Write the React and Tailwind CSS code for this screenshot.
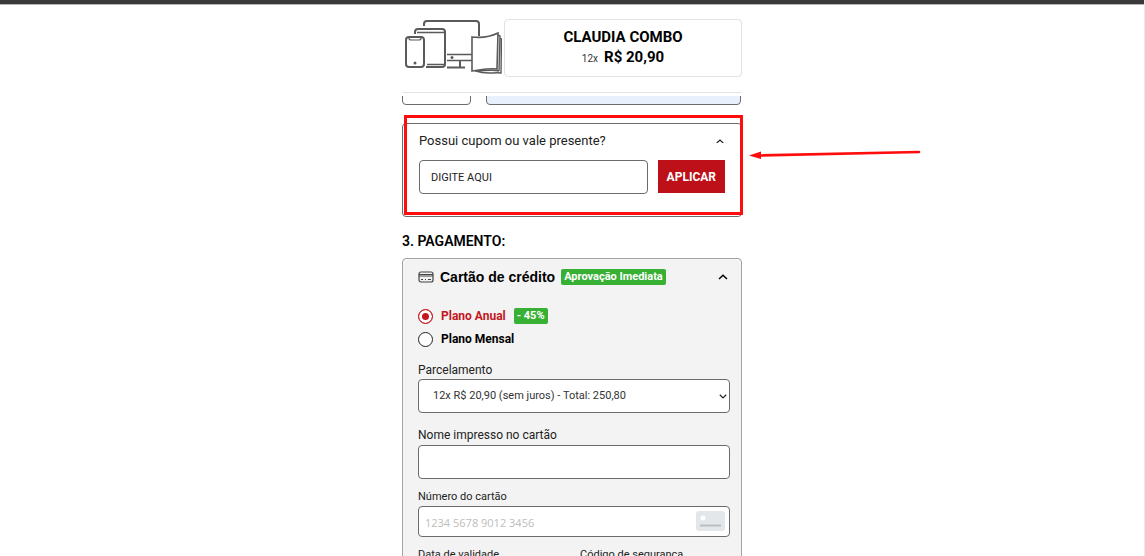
import React, { useState } from 'react';

const fieldClass = 'block w-full rounded border border-[#6b6b6b] bg-white outline-none';

const DevicesIcon = () => (
  <svg width="98" height="56" viewBox="0 0 98 56" fill="none" stroke="#5a5a5a" strokeWidth="2" className="shrink-0" aria-hidden="true">
    {/* monitor */}
    <path d="M20 6V4a3 3 0 0 1 3-3h49a3 3 0 0 1 3 3v12" />
    <path d="M43 34.500h25M43 40.500h25" strokeWidth="1.6" />
    <path d="M56 41v6M43 47.500h18" />
    <circle cx="48" cy="37.500" r="1.5" fill="#5a5a5a" stroke="none" />
    {/* tablet */}
    <path d="M11 14v-2a3 3 0 0 1 3-3h24a3 3 0 0 1 3 3v32a3 3 0 0 1-3 3H22" />
    <path d="M13 12.5h27M23 44.500h17" strokeWidth="1.4" />
    {/* phone */}
    <rect x="2" y="17" width="18" height="30" rx="3" />
    <path d="M5 18c0 2 1 2 2 2h8c1 0 2 0 2-2" strokeWidth="1.2" />
    <circle cx="11" cy="43" r="1.500" fill="#5a5a5a" stroke="none" />
    {/* magazine */}
    <path d="M68 17c9 1 18 0 26-4l-1 36c-7-1-17 1-25 2z" fill="#fff" strokeWidth="1.6" />
    <path d="M94 15l2 1-1 35M96 18l1.500 1-.5 34c-8-1-15 2-25-2M95 51c-7-2-15 0-24 0" strokeWidth="1.4" />
  </svg>
);

const ChevronUp = ({ className }) => (
  <svg viewBox="0 0 10 6" fill="none" stroke="currentColor" strokeWidth="1.5" className={className} aria-hidden="true">
    <path d="M1 5l4-3.800L9 5" />
  </svg>
);

const CardIcon = () => (
  <svg width="16" height="12" viewBox="0 0 16 12" fill="none" stroke="#444" strokeWidth="1.2" aria-hidden="true">
    <rect x="1" y="1" width="14" height="10" rx="2" />
    <path d="M1 3.500h14M1 5h14" strokeWidth="1" />
    <path d="M3 8.500h2M7 8.500h1M10 8.500h3" />
  </svg>
);

const Badge = ({ children }) => (
  <span className="rounded-xs bg-[#37b034] px-[3px] text-[11px] leading-4 font-bold text-white">{children}</span>
);

const PlanOption = ({ value, label, plan, onChange, children }) => {
  const selected = plan === value;
  return (
    <div className="flex h-4 items-center gap-2">
      <label className={`flex items-center gap-2 text-xs font-bold ${selected ? 'text-[#c4161c]' : 'text-black'}`}>
        <input
          type="radio"
          name="plano"
          value={value}
          checked={selected}
          onChange={() => onChange(value)}
          className="size-[15px] appearance-none rounded-full border border-[#222] bg-white checked:border-[#c4161c] checked:bg-[#c4161c] checked:shadow-[inset_0_0_0_3px_white]"
        />
        {label}
      </label>
      {children}
    </div>
  );
};

const Header = () => (
  <header className="border-b border-[#e4e4e4] pt-3.5 pb-[15px]">
    <div className="flex items-center gap-0.5 pl-0.5">
      <DevicesIcon />
      <div className="flex h-[58px] flex-1 flex-col items-center justify-center rounded-sm border border-[#e2e2e2] text-black">
        <strong className="text-[15px] leading-5">CLAUDIA COMBO</strong>
        <p className="text-[15px] leading-5">
          <span className="mr-1.5 text-[10px] text-[#333]">12x</span>
          <strong>R$ 20,90</strong>
        </p>
      </div>
    </div>
  </header>
);

const Coupon = () => {
  const [open, setOpen] = useState(true);
  return (
    <section className="relative mt-[18px] rounded-sm border border-[#6b6b6b] px-4 pt-[9px] pb-[22px]">
      <button type="button" onClick={() => setOpen(!open)} className="flex w-full items-center justify-between text-[13px] leading-4 text-[#222]">
        Possui cupom ou vale presente?
        <ChevronUp className="mr-px w-2" />
      </button>
      {open && (
        <form className="mt-[11px] flex gap-2.5" onSubmit={(e) => e.preventDefault()}>
          <input
            aria-label="Cupom"
            placeholder="DIGITE AQUI"
            className="h-[34px] min-w-0 flex-1 rounded border border-[#6b6b6b] px-[11px] text-[11px] outline-none placeholder:text-[#222]"
          />
          <button type="submit" className="h-[33px] bg-[#bd1019] px-[9px] text-xs font-bold text-white">
            APLICAR
          </button>
        </form>
      )}
      {/* highlight and pointer */}
      <div className="pointer-events-none absolute -top-[9px] -right-[2px] bottom-px left-px border-3 border-[#ff0c0c]" />
      <svg width="172" height="10" viewBox="0 0 172 10" className="pointer-events-none absolute top-[26px] left-full ml-2" aria-hidden="true">
        <path d="M8 5.500L170 2" stroke="#ff0c0c" strokeWidth="2.600" strokeLinecap="round" />
        <path d="M0 5.500L12 1.500V9z" fill="#ff0c0c" />
      </svg>
    </section>
  );
};

const Payment = () => {
  const [plan, setPlan] = useState('anual');
  return (
    <section>
      <h2 className="mt-3.5 text-sm leading-5 font-semibold text-black">3. PAGAMENTO:</h2>
      <div className="mt-[7px] rounded-sm border border-[#a3a3a3] bg-[#f3f3f3] pt-2.5 pr-[11px] pb-4 pl-[15px] text-xs leading-4 text-[#222]">
        <div className="flex items-center">
          <CardIcon />
          <h3 className="mr-1.5 ml-1.5 font-['Liberation_Sans',sans-serif] text-sm leading-4 font-bold text-black">Cartão de crédito</h3>
          <Badge>Aprovação Imediata</Badge>
          <ChevronUp className="mr-0.5 ml-auto w-2.5 text-black" />
        </div>

        <div className="mt-[23px] flex flex-col gap-[7px]">
          <PlanOption value="anual" label="Plano Anual" plan={plan} onChange={setPlan}>
            <Badge>- 45%</Badge>
          </PlanOption>
          <PlanOption value="mensal" label="Plano Mensal" plan={plan} onChange={setPlan} />
        </div>

        <label htmlFor="parcelas" className="mt-[15px] block">Parcelamento</label>
        <div className="relative mt-px">
          <select id="parcelas" className={`${fieldClass} h-[34px] appearance-none pl-3.5 text-[11px] text-[#333]`}>
            <option>12x R$ 20,90 (sem juros) - Total: 250,80</option>
          </select>
          <ChevronUp className="pointer-events-none absolute top-[15px] right-[3px] w-2 rotate-180" />
        </div>

        <label htmlFor="nome" className="mt-[14px] block">Nome impresso no cartão</label>
        <input id="nome" className={`${fieldClass} mt-0.5 h-[34px] px-1.5`} />

        <label htmlFor="numero" className="mt-2.5 block text-[11px] leading-4">Número do cartão</label>
        <div className="relative mt-px">
          <input
            id="numero"
            placeholder="1234 5678 9012 3456"
            className={`${fieldClass} h-[31px] px-1.5 pt-0.5 font-['Open_Sans',sans-serif] text-[11px] placeholder:text-[#bdbdbd]`}
          />
          <svg width="29" height="20" viewBox="0 0 29 20" className="absolute top-[5px] right-[5px]" aria-hidden="true">
            <rect width="29" height="20" rx="3" fill="#e3e7ea" />
            <circle cx="7" cy="7" r="2.500" fill="#fff" />
            <path d="M4 14.500h21" stroke="#b9bec2" strokeWidth="2" />
          </svg>
        </div>

        <div className="mt-2.5 grid grid-cols-2 gap-3 text-[11px] leading-4">
          <div>
            <label htmlFor="validade" className="block">Data de validade</label>
            <input id="validade" className={`${fieldClass} mt-0.5 h-[34px] px-1.5`} />
          </div>
          <div>
            <label htmlFor="codigo" className="block">Código de segurança</label>
            <input id="codigo" className={`${fieldClass} mt-0.5 h-[34px] px-1.5`} />
          </div>
        </div>
      </div>
    </section>
  );
};

const App = () => (
  <div className="h-screen overflow-hidden border-r border-[#e8e8e8] bg-white font-['Roboto',sans-serif]">
    <div className="h-[5px] border-b border-[#b5b5b5] bg-[#3a3a3a]" />
    <main className="mx-auto w-full max-w-[340px]">
      <Header />
      <div className="mt-[3px] flex h-[9px] items-end gap-[15px] overflow-hidden pr-px">
        <input aria-label="Número" className="h-8 w-[69px] shrink-0 rounded border border-[#6b6b6b] px-2 text-xs outline-none" />
        <input aria-label="Complemento" className="h-8 min-w-0 flex-1 rounded border border-[#6b6b6b] bg-[#e8f0fe] px-2 text-xs outline-none" />
      </div>
      <Coupon />
      <Payment />
    </main>
  </div>
);

export default App;
